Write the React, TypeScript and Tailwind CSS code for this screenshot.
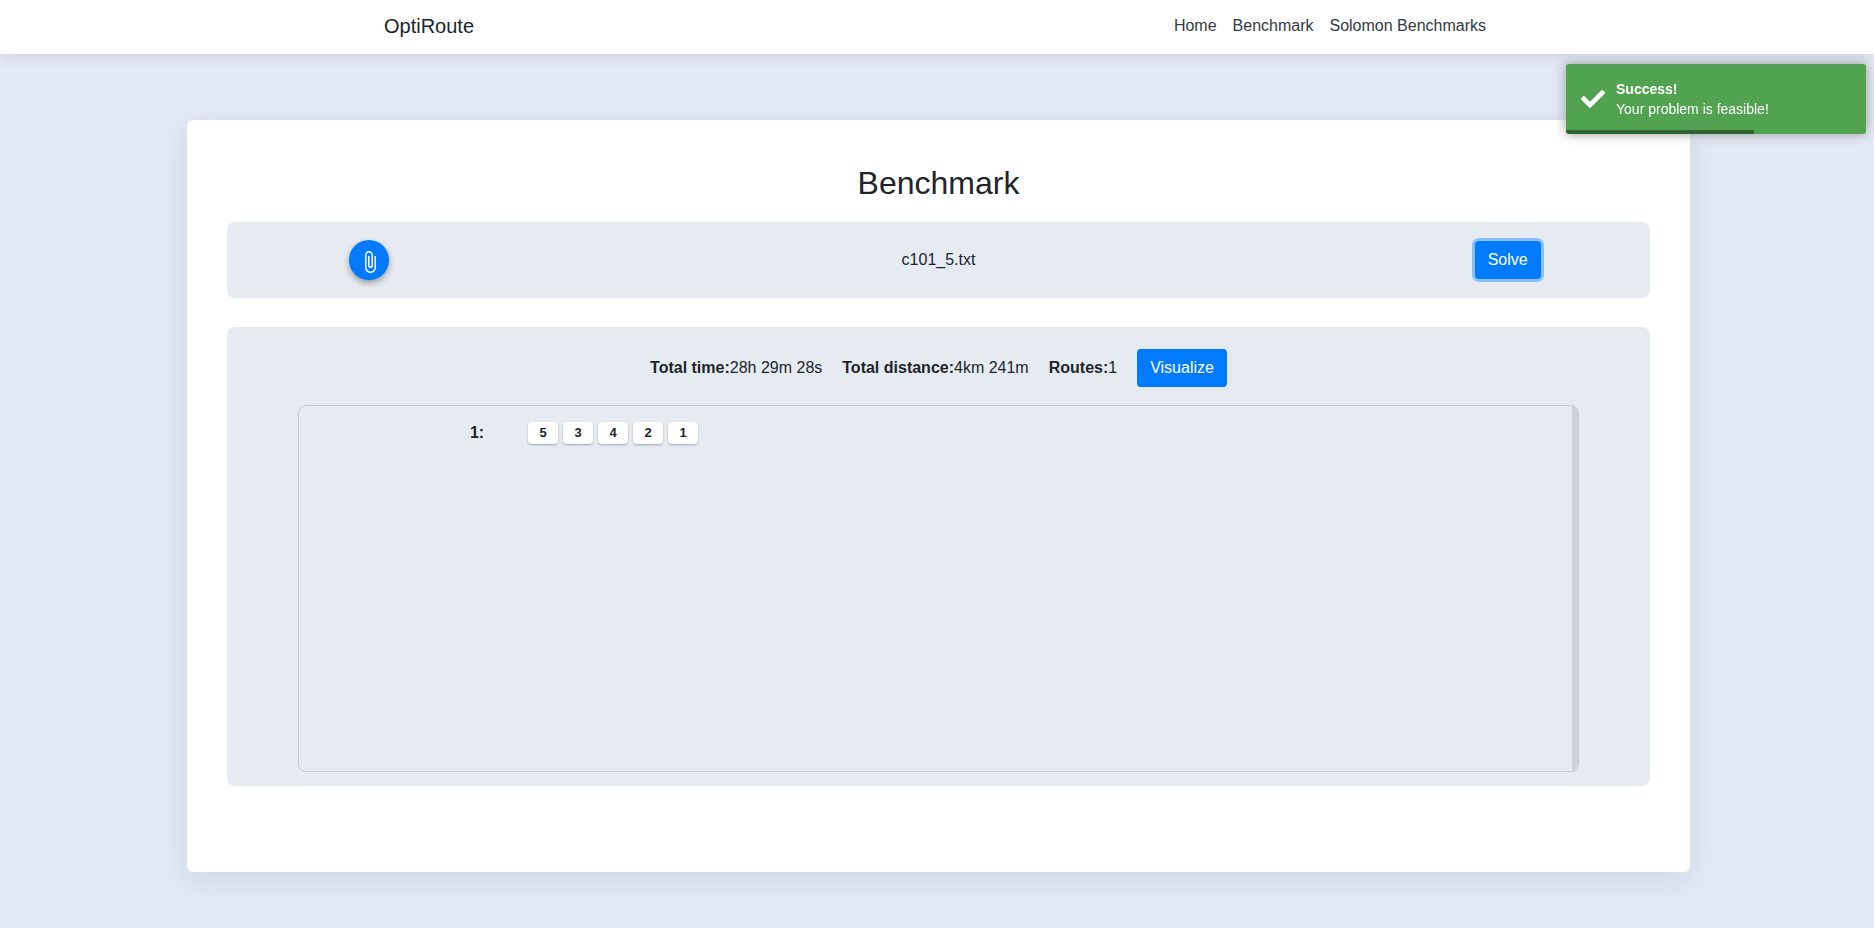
import React from "react";
import { FaCheck } from "react-icons/fa";
import { MdAttachFile } from "react-icons/md";

const links = ["Home", "Benchmark", "Solomon Benchmarks"];
const stats = [
  { label: "Total time:", value: "28h 29m 28s" },
  { label: "Total distance:", value: "4km 241m" },
  { label: "Routes:", value: "1" },
];
const routes = [{ id: 1, stops: [5, 3, 4, 2, 1] }];

function Toast() {
  return (
    <div
      role="status"
      className="fixed top-16 right-2 flex h-[70px] w-[300px] items-center gap-[11px] overflow-hidden rounded-[3px] bg-[#51a351] pl-[15px] text-sm leading-5 text-white shadow-[0_0_12px_#999999]"
    >
      <FaCheck className="size-6" />
      <div>
        <div className="font-bold">Success!</div>
        <div>Your problem is feasible!</div>
      </div>
      <div className="absolute bottom-0 left-0 h-1 w-[188px] bg-black/40" />
    </div>
  );
}

export default function App() {
  return (
    <div className="min-h-screen bg-[#e3e9f5] pb-14 font-['Liberation_Sans',Arial,sans-serif] text-base text-[#212529]">
      <header className="bg-white shadow-[0_2px_16px_rgba(0,0,0,0.1)]">
        <nav className="mx-auto flex h-[54px] max-w-[1140px] items-center justify-between pr-[21px] pl-[17px]">
          <a href="#" className="pb-0.5 text-xl text-[#212529]">
            OptiRoute
          </a>
          <ul className="flex gap-4 pb-0.5">
            {links.map((l) => (
              <li key={l}>
                <a href="#" className="text-[#343a40]">
                  {l}
                </a>
              </li>
            ))}
          </ul>
        </nav>
      </header>

      <main className="mt-[66px] mr-[184px] ml-[187px] rounded-md bg-white px-10 pt-11 pb-[86px] shadow-[0_8px_32px_rgba(31,38,90,0.1)]">
        <h1 className="mb-5 text-center text-[32px] leading-[38px]">Benchmark</h1>

        <section className="grid h-[76px] grid-cols-[1fr_3fr_1fr] items-center justify-items-center rounded-lg bg-[#e6ebf2]">
          <button
            type="button"
            aria-label="Attach file"
            className="flex size-10 items-center justify-center rounded-full bg-[#007bff] pt-1 pl-0.5 text-white shadow-[0_3px_6px_rgba(0,0,0,0.35)]"
          >
            <MdAttachFile className="size-6" />
          </button>
          <span>c101_5.txt</span>
          <button
            type="button"
            className="h-[38px] rounded bg-[#007bff] px-[13px] text-white shadow-[0_0_0_3px_rgba(0,123,255,0.4)]"
          >
            Solve
          </button>
        </section>

        <section className="mt-[29px] rounded-lg bg-[#e6ebf2] pt-[22px] pb-[14px]">
          <div className="flex items-center justify-center gap-5">
            {stats.map((s) => (
              <p key={s.label}>
                <b>{s.label}</b>
                {s.value}
              </p>
            ))}
            <button type="button" className="h-[38px] rounded bg-[#007bff] px-[13px] text-white">
              Visualize
            </button>
          </div>

          <div className="mx-auto mt-[18px] flex h-[367px] w-[90%] overflow-hidden rounded-lg border border-[#c6cad4]">
            <div className="flex-1 pt-[15px]">
              {routes.map((r) => (
                <div key={r.id} className="grid grid-cols-[185px_1fr] items-center gap-11">
                  <b className="text-right">{r.id}:</b>
                  <ul className="flex gap-[5px]">
                    {r.stops.map((s) => (
                      <li
                        key={s}
                        className="flex h-[22px] w-[30px] items-center justify-center rounded bg-white text-[13px] font-bold shadow-[0_1px_2px_rgba(0,0,0,0.3)]"
                      >
                        {s}
                      </li>
                    ))}
                  </ul>
                </div>
              ))}
            </div>
            <div className="w-1.5 bg-[#ced2da]" />
          </div>
        </section>
      </main>

      <Toast />
    </div>
  );
}
